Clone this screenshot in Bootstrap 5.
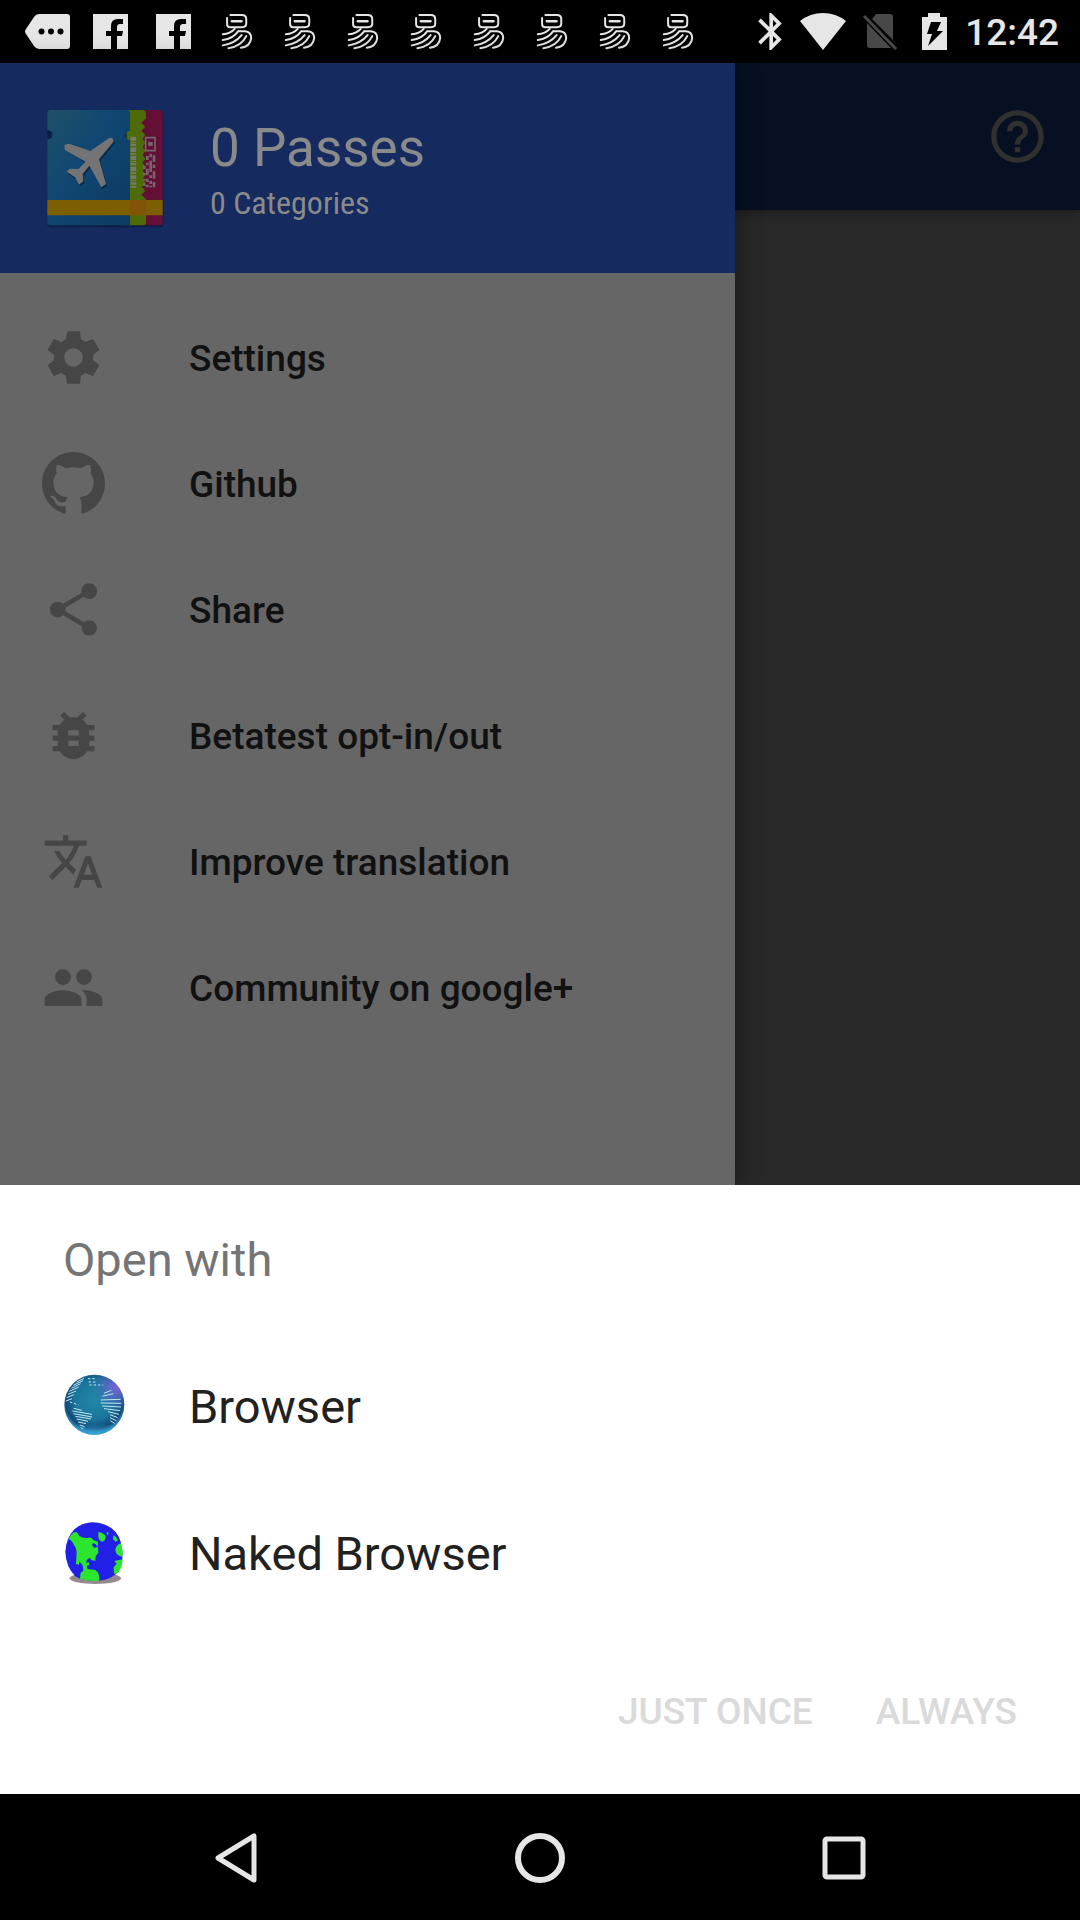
<!DOCTYPE html>
<html lang="en">
<head>
<meta charset="utf-8">
<meta name="viewport" content="width=device-width, initial-scale=1">
<title>Passes – Open with</title>
<link rel="stylesheet" href="https://cdn.jsdelivr.net/npm/bootstrap@5.3.0/dist/css/bootstrap.min.css">
<style>
  body { font-family: Roboto, "Liberation Sans", sans-serif; background: #282828; }
  svg { display: block; flex: none; overflow: visible; }
  .status-bar { height: 63px; background: #000; color: #e6e6e6; padding: 0 21px 0 16px; }
  .notice-slot { width: 63px; height: 63px; }
  .status-tray { gap: 18px; height: 63px; }
  .clock-text { font-size: 37px; line-height: 60px; font-weight: 500; padding-top: 3px; }
  .side-drawer { flex: 0 1 735px; background: #666; z-index: 1; box-shadow: 0 0 24px rgba(0, 0, 0, .45); }
  .drawer-head { height: 210px; background: #152a5e; color: #8a8a8a; padding: 0 42px; gap: 42px; }
  .head-title { font-size: 53px; line-height: 62px; }
  .head-sub { font-family: "Roboto Condensed", Roboto, sans-serif; font-size: 32px; line-height: 48px; }
  .drawer-menu { padding: 21px 0; }
  .drawer-link { height: 126px; padding: 0 42px; gap: 84px; color: #111; font-size: 37px; font-weight: 500; text-decoration: none; }
  .drawer-link span { padding-top: 4px; }
  .drawer-link svg { fill: #464646; }
  .top-bar { height: 147px; background: #071022; padding: 0 31px; box-shadow: 0 2px 10px rgba(0, 0, 0, .35); }
  .bare-btn { background: none; border: 0; padding: 0; font-weight: inherit; }
  .open-sheet { background: #fff; color: #212121; z-index: 2; }
  .sheet-title { color: #757575; font-size: 47px; line-height: 56px; font-weight: 400; padding: 47px 63px 46px; margin: 0; }
  .app-choice { height: 147px; padding: 0 63px; gap: 63px; color: inherit; font-size: 47px; }
  .sheet-actions { height: 166px; padding: 2px 63px 0; gap: 63px; font-size: 37px; font-weight: 500; }
  .sheet-actions button:disabled { color: #dadada; }
  .nav-keys { height: 126px; background: #000; padding: 2px 84px 0; z-index: 2; }
</style>
<script src="https://cdn.jsdelivr.net/npm/bootstrap@5.3.0/dist/js/bootstrap.bundle.min.js"></script>
</head>
<body>
<!-- Shapes that are used more than once -->
<svg width="0" height="0" class="position-absolute" aria-hidden="true">
  <symbol id="ic-fb" viewBox="0 0 35 35"><path fill="#e6e6e6" d="M0 0H35V35H24V22h5l1-5h-6v-4q0-3 3-3h3V5h-5q-7 0-7 7v5h-5v5h5v13H0z"/></symbol>
  <symbol id="ic-yi" viewBox="662 40 96 112"><g fill="none" stroke="#e6e6e6" stroke-width="6" stroke-linecap="round" stroke-linejoin="round">
    <path d="M680 55V74Q680 83 690 83H725Q738 83 738 72V58Q738 46 724 46H690"/>
    <path d="M694 65H724" stroke-width="7"/>
    <path d="M667 104Q690 103 703 88M714 95H734Q753 97 753 116Q750 142 722 145M667 122Q698 118 714 95M667 138Q704 132 724 107M684 147Q724 140 738 110"/>
  </g></symbol>
</svg>

<div class="d-flex flex-column min-vh-100">
  <header class="status-bar d-flex justify-content-between">
    <div class="d-flex">
      <div class="notice-slot d-flex align-items-center justify-content-center"><svg width="45" height="35" viewBox="0 0 45 35"><path fill="#e6e6e6" d="M14 0H42Q45 0 45 3V32Q45 35 42 35H14Q11 35 9 32L1 20Q-1 17.500 1 15L9 3Q11 0 14 0z"/><g><circle cx="16.500" cy="17.500" r="3"/><circle cx="26" cy="17.500" r="3"/><circle cx="35.500" cy="17.500" r="3"/></g></svg></div>
      <div class="notice-slot d-flex align-items-center justify-content-center"><svg width="35" height="35"><use href="#ic-fb"/></svg></div>
      <div class="notice-slot d-flex align-items-center justify-content-center"><svg width="35" height="35"><use href="#ic-fb"/></svg></div>
      <div class="notice-slot d-flex align-items-center justify-content-center"><svg width="32" height="37"><use href="#ic-yi"/></svg></div>
      <div class="notice-slot d-flex align-items-center justify-content-center"><svg width="32" height="37"><use href="#ic-yi"/></svg></div>
      <div class="notice-slot d-flex align-items-center justify-content-center"><svg width="32" height="37"><use href="#ic-yi"/></svg></div>
      <div class="notice-slot d-flex align-items-center justify-content-center"><svg width="32" height="37"><use href="#ic-yi"/></svg></div>
      <div class="notice-slot d-flex align-items-center justify-content-center"><svg width="32" height="37"><use href="#ic-yi"/></svg></div>
      <div class="notice-slot d-flex align-items-center justify-content-center"><svg width="32" height="37"><use href="#ic-yi"/></svg></div>
      <div class="notice-slot d-flex align-items-center justify-content-center"><svg width="32" height="37"><use href="#ic-yi"/></svg></div>
      <div class="notice-slot d-flex align-items-center justify-content-center"><svg width="32" height="37"><use href="#ic-yi"/></svg></div>
    </div>
    <div class="status-tray d-flex align-items-center">
      <svg width="24" height="37" viewBox="5 2 12.710 20" fill="#e6e6e6"><path d="M17.710 7.710 12 2h-1v7.590L6.410 5 5 6.410 10.590 12 5 17.590 6.410 19 11 14.410V22h1l5.710-5.710-4.300-4.290zM13 5.830l1.880 1.880L13 9.590zm1.880 10.460L13 18.170v-3.760z"/></svg>
      <svg width="46" height="37" viewBox="0 0 46 37" fill="#e6e6e6"><path d="M0 8Q10 0 23 0T46 8L23 37z"/></svg>
      <svg width="40" height="37" viewBox="0 0 40 37"><path fill="#484848" d="M12 1H26Q29 1 29 4V27L8 6zM3 10 27 35H6Q3 35 3 32z"/><path d="M0 3 32 36" stroke="#484848" stroke-width="3"/></svg>
      <svg width="25" height="37" viewBox="0 0 25 37"><path fill="#e6e6e6" d="M6 0H18V4H25V37H0V4H6z"/><path d="M9 9H19L15 18H21L6 33 10 21H5z"/></svg>
      <span class="clock-text">12:42</span>
    </div>
  </header>

  <main class="d-flex flex-grow-1">
    <aside class="side-drawer">
      <div class="drawer-head d-flex align-items-center">
        <svg width="126" height="126" viewBox="36 15 378 378" role="img" aria-label="Passes">
          <defs>
            <linearGradient id="pass-blue" x1="0" y1="0" x2="1" y2="1"><stop offset="0" stop-color="#1f5167"/><stop offset=".45" stop-color="#104672"/><stop offset="1" stop-color="#0b3a61"/></linearGradient>
          </defs>
          <path fill="#0d1f48" d="M52 42H400V372Q400 382 390 382H62Q52 382 52 372z"/>
          <path fill="#640f35" d="M320 30H388Q398 30 398 40V366Q398 376 388 376H320z"/>
          <path fill="#4d6b08" d="M290 30H340Q348 32 348 40V55L334 68 346 80 334 92 346 104 338 116 346 128 338 140 346 152 338 164 346 176 338 188 346 200 338 212 346 224 338 236 346 248 336 260 346 272 334 284 348 298V366Q348 376 338 376H290z"/>
          <path fill="url(#pass-blue)" d="M62 30H290Q300 30 300 40V92Q285 95 286 108Q288 120 300 120V376H62Q52 376 52 366V118Q67 116 67 104T52 90V40Q52 30 62 30z"/>
          <path fill="#7d5e02" d="M52 300H398V346H52z"/><path fill="#835407" d="M300 300H348V346H300z"/>
          <path fill="#092b4c" d="M108 142 120 137 186 160 241 121Q256 118 254 132L210 184 231 258 217 268 181 203 161 228 163 250 150 260 138 238 113 221 123 212 148 213 170 191z"/>
          <path fill="#747474" d="M103 135 117 131 181 153 237 114Q252 111 250 126L207 178 228 252 214 262 178 197 158 222 160 244 147 254 135 232 110 215 120 206 145 207 167 185 105 150z"/>
          <path stroke="#77796c" stroke-width="17" stroke-dasharray="12 3 3 3 7 4 14 3 5 4" d="M310 110V263"/>
          <g fill="none" stroke="#77646c"><path stroke-width="5" d="M347 113H375V152H347z"/><path stroke-width="12" d="M355 132H368"/><path stroke-width="8" d="M372 166V186M372 194V204M372 214V236M372 246V262M362 162V172M362 182V216M362 226V234M362 242V252M352 168V180M352 188V196M352 206V226M352 236V246M352 254V262M343 198V208M343 218V226M343 236V242M343 250V258M362 257V262"/></g>
        </svg>
        <div class="pt-2">
          <div class="head-title">0 Passes</div>
          <div class="head-sub">0 Categories</div>
        </div>
      </div>
      <nav class="drawer-menu d-flex flex-column">
        <a class="drawer-link d-flex align-items-center" href="#settings"><svg width="63" height="63" viewBox="0 0 24 24"><path d="M19.430 12.980c.040-.320.070-.640.070-.980s-.030-.660-.070-.980l2.110-1.650c.190-.150.240-.420.120-.640l-2-3.460c-.120-.220-.390-.300-.610-.220l-2.490 1c-.520-.400-1.080-.730-1.690-.980l-.380-2.650C14.460 2.180 14.250 2 14 2h-4c-.250 0-.460.180-.490.420l-.380 2.650c-.610.250-1.170.590-1.690.980l-2.490-1c-.230-.090-.490 0-.610.220l-2 3.460c-.130.220-.070.490.120.640l2.110 1.650c-.040.320-.070.650-.070.980s.030.660.070.980l-2.110 1.650c-.190.150-.240.420-.120.640l2 3.460c.120.220.390.300.610.220l2.490-1c.520.400 1.080.730 1.690.980l.380 2.650c.030.240.240.420.490.420h4c.250 0 .460-.180.490-.420l.380-2.650c.610-.250 1.170-.590 1.690-.980l2.490 1c.230.090.490 0 .610-.220l2-3.460c.120-.220.070-.490-.120-.640zM12 15.500c-1.930 0-3.500-1.570-3.500-3.500s1.570-3.500 3.500-3.500 3.500 1.570 3.500 3.500-1.570 3.500-3.500 3.500z"/></svg><span>Settings</span></a>
        <a class="drawer-link d-flex align-items-center" href="#github"><svg width="63" height="63" viewBox="0 0 16 16"><path d="M8 0C3.580 0 0 3.580 0 8c0 3.540 2.290 6.530 5.470 7.590.400.070.550-.170.550-.380 0-.190-.010-.820-.010-1.490-2.010.370-2.530-.490-2.690-.940-.090-.230-.480-.940-.820-1.130-.280-.150-.680-.520-.010-.530.630-.010 1.080.580 1.230.820.720 1.210 1.870.870 2.330.660.070-.520.280-.870.510-1.070-1.780-.200-3.640-.890-3.640-3.950 0-.870.310-1.590.820-2.150-.080-.200-.360-1.020.080-2.120 0 0 .670-.210 2.200.820.640-.180 1.320-.270 2-.270s1.360.090 2 .270c1.530-1.040 2.200-.820 2.200-.820.440 1.100.160 1.920.080 2.120.510.560.820 1.270.820 2.150 0 3.070-1.870 3.750-3.650 3.950.290.250.540.730.540 1.480 0 1.070-.010 1.930-.010 2.200 0 .210.150.460.550.380A8.010 8.010 0 0 0 16 8c0-4.420-3.580-8-8-8z"/></svg><span>Github</span></a>
        <a class="drawer-link d-flex align-items-center" href="#share"><svg width="63" height="63" viewBox="0 0 24 24"><path d="M18 16.080c-.760 0-1.440.300-1.960.770L8.910 12.700c.050-.230.090-.460.090-.700s-.040-.470-.090-.700l7.050-4.110c.540.500 1.250.810 2.040.810 1.660 0 3-1.340 3-3s-1.340-3-3-3-3 1.340-3 3c0 .240.040.470.090.700L8.040 9.810C7.500 9.310 6.790 9 6 9c-1.660 0-3 1.340-3 3s1.340 3 3 3c.790 0 1.500-.310 2.040-.810l7.120 4.160c-.050.210-.080.430-.080.650 0 1.610 1.310 2.920 2.920 2.920s2.920-1.310 2.920-2.920-1.310-2.920-2.920-2.920z"/></svg><span>Share</span></a>
        <a class="drawer-link d-flex align-items-center" href="#betatest"><svg width="63" height="63" viewBox="0 0 24 24"><path d="M20 8h-2.810c-.450-.780-1.070-1.450-1.820-1.960L17 4.410 15.590 3l-2.170 2.170C12.960 5.060 12.490 5 12 5s-.960.060-1.410.170L8.410 3 7 4.410l1.620 1.630C7.880 6.550 7.260 7.220 6.810 8H4v2h2.090c-.050.330-.090.660-.090 1v1H4v2h2v1c0 .340.040.670.090 1H4v2h2.810c1.040 1.790 2.970 3 5.190 3s4.150-1.210 5.190-3H20v-2h-2.090c.050-.330.090-.660.090-1v-1h2v-2h-2v-1c0-.340-.040-.670-.090-1H20V8zm-6 8h-4v-2h4v2zm0-4h-4v-2h4v2z"/></svg><span>Betatest opt-in/out</span></a>
        <a class="drawer-link d-flex align-items-center" href="#translate"><svg width="63" height="63" viewBox="0 0 24 24"><path d="m12.870 15.070-2.540-2.510.030-.030c1.740-1.940 2.980-4.170 3.710-6.530H17V4h-7V2H8v2H1v1.990h11.170C11.500 7.920 10.440 9.750 9 11.350 8.070 10.320 7.300 9.190 6.690 8h-2c.730 1.630 1.730 3.170 2.980 4.560l-5.090 5.020L4 19l5-5 3.110 3.110.760-2.040zM18.500 10h-2L12 22h2l1.120-3h4.750L21 22h2l-4.500-12zm-2.620 7 1.620-4.330L19.120 17h-3.240z"/></svg><span>Improve translation</span></a>
        <a class="drawer-link d-flex align-items-center" href="#community"><svg width="63" height="63" viewBox="0 0 24 24"><path d="M16 11c1.660 0 2.990-1.340 2.990-3S17.660 5 16 5s-3 1.340-3 3 1.340 3 3 3zm-8 0c1.660 0 2.990-1.340 2.990-3S9.660 5 8 5 5 6.340 5 8s1.340 3 3 3zm0 2c-2.330 0-7 1.170-7 3.500V19h14v-2.500c0-2.330-4.670-3.500-7-3.500zm8 0c-.290 0-.620.020-.970.050 1.160.840 1.970 1.970 1.970 3.450V19h6v-2.500c0-2.330-4.670-3.500-7-3.500z"/></svg><span>Community on google+</span></a>
      </nav>
    </aside>
    <section class="flex-grow-1">
      <div class="top-bar d-flex align-items-center justify-content-end">
        <button class="bare-btn" type="button" aria-label="Help"><svg width="63" height="63" viewBox="0 0 24 24" fill="#30302f"><path d="M11 18h2v-2h-2v2zm1-16C6.480 2 2 6.480 2 12s4.480 10 10 10 10-4.480 10-10S17.520 2 12 2zm0 18c-4.410 0-8-3.590-8-8s3.590-8 8-8 8 3.590 8 8-3.590 8-8 8zm0-14c-2.210 0-4 1.790-4 4h2c0-1.100.900-2 2-2s2 .900 2 2c0 2-3 1.750-3 5h2c0-2.250 3-2.500 3-5 0-2.210-1.790-4-4-4z"/></svg></button>
      </div>
    </section>
  </main>

  <section class="open-sheet" aria-labelledby="sheet-title">
    <h1 class="sheet-title" id="sheet-title">Open with</h1>
    <button class="app-choice btn rounded-0 border-0 w-100 d-flex align-items-center text-start" type="button">
      <svg width="63" height="63" viewBox="71 49 189 189" aria-hidden="true">
        <defs>
          <radialGradient id="globe-sea" cx=".5" cy=".42" r=".55"><stop offset="0" stop-color="#2088a8"/><stop offset=".6" stop-color="#1a759c"/><stop offset=".88" stop-color="#124b78"/><stop offset="1" stop-color="#2f8db8"/></radialGradient>
          <radialGradient id="globe-glow" cx=".88" cy=".2" r=".4"><stop offset="0" stop-color="#8263df"/><stop offset="1" stop-color="#5c6bd0" stop-opacity="0"/></radialGradient>
          <linearGradient id="globe-base" x1="0" y1="0" x2="0" y2="1"><stop offset=".82" stop-color="#2d9bd0" stop-opacity="0"/><stop offset="1" stop-color="#35a5d8"/></linearGradient>
        </defs>
        <circle cx="165" cy="135" r="90" fill="url(#globe-sea)"/>
        <circle cx="165" cy="135" r="90" fill="url(#globe-glow)"/>
        <circle cx="165" cy="135" r="90" fill="url(#globe-base)"/>
        <g fill="none" stroke="#c3e6ee" stroke-width="3">
          <path d="M112 67 134 56M102 77 131 63M96 86 124 72M90 95 118 82M86 104 110 94M82 114 104 105M80 124 98 117"/>
          <path d="M103 146 128 152M99 154 158 164M102 162 158 172M108 170 155 178M112 178 146 185M116 187 140 192M121 196 136 201M124 204 132 207"/>
          <path d="M194 101 216 92M189 110 222 102M184 121 244 119M184 130 246 131M188 139 245 142M194 147 243 153M206 156 239 164M212 165 235 174M212 174 231 183M213 183 226 191"/>
          <path stroke-dasharray="7 6" d="M146 57H170M148 67H168M150 76H192M92 127 118 136"/>
        </g>
      </svg>
      <span>Browser</span>
    </button>
    <button class="app-choice btn rounded-0 border-0 w-100 d-flex align-items-center text-start" type="button">
      <svg width="63" height="63" viewBox="71 488 189 189" aria-hidden="true">
        <ellipse cx="168" cy="654" rx="77" ry="17" fill="#96898d"/>
        <path fill="#221fe6" d="M158 486Q192 487 216 503Q244 524 248 565Q254 608 236 635Q216 658 180 661Q132 664 108 648Q80 620 78 575Q80 533 105 507Q125 488 158 486z"/>
        <g fill="#2be52e">
          <path d="M88 536Q96 518 107 515 116 516 119 526 133 535 148 532 157 529 162 539L176 544 175 560 169 552 162 548 158 554 164 562 176 560 177 577 169 588 168 601 157 600 151 592 143 598 140 607 149 606 150 614 142 617 145 626 168 629Q182 638 180 661 147 664 122 655L124 637 132 631 130 615 119 603 119 613 110 611 112 574 109 562 97 542z"/>
          <path d="M177 515Q190 516 199 526 200 540 189 544 180 544 177 530zM203 515 208 517 207 523 202 522zM222 525Q229 526 236 540L229 544 221 537zM244 549Q230 553 228 570 230 586 249 590Q252 567 244 549zM250 597 225 602 232 610 223 621 224 641 237 637Q249 619 250 597z"/>
        </g>
      </svg>
      <span>Naked Browser</span>
    </button>
    <div class="sheet-actions d-flex align-items-center justify-content-end">
      <button class="bare-btn" type="button" disabled>JUST ONCE</button>
      <button class="bare-btn" type="button" disabled>ALWAYS</button>
    </div>
  </section>

  <nav class="nav-keys d-flex align-items-center" aria-label="System">
    <button class="bare-btn col d-flex justify-content-center" type="button" aria-label="Back"><svg width="44" height="50" viewBox="0 0 44 50" fill="none" stroke="#e6e6e6" stroke-width="5" stroke-linejoin="round"><path d="M40 3V47L4 25z"/></svg></button>
    <button class="bare-btn col d-flex justify-content-center" type="button" aria-label="Home"><svg width="50" height="50" viewBox="0 0 50 50" fill="none" stroke="#e6e6e6" stroke-width="6"><circle cx="25" cy="25" r="22"/></svg></button>
    <button class="bare-btn col d-flex justify-content-center" type="button" aria-label="Recent apps"><svg width="44" height="44" viewBox="0 0 44 44" fill="none" stroke="#e6e6e6" stroke-width="5"><rect x="3" y="3" width="38" height="38" rx="2"/></svg></button>
  </nav>
</div>
</body>
</html>
